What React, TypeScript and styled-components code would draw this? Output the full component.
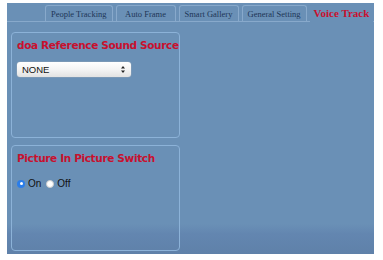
import React from "react";
import styled, { createGlobalStyle } from "styled-components";

const Global = createGlobalStyle`
  html, body { margin: 0; padding: 0; background: #ffffff; }
  body { width: 383px; height: 260px; overflow: hidden; }
`;

const Page = styled.div`
  padding: 3px 9px 0 7px;
`;

const Frame = styled.div`
  width: 367px;
  height: 251px;
  overflow: hidden;
  background: linear-gradient(to bottom, #6a90b6 0%, #6a90b6 88%, #6386b0 92%, #5f81a9 100%);
  display: flex;
  flex-direction: column;
`;

const TabBar = styled.div`
  display: flex;
  align-items: flex-end;
  height: 18px;
  padding-left: 38px;
  gap: 3px;
  border-bottom: 1px solid #88a9cb;
`;

const Tab = styled.div<{ $active?: boolean }>`
  flex-shrink: 0;
  white-space: nowrap;
  min-width: ${(p) => (p.$active ? "0" : "60px")};
  height: ${(p) => (p.$active ? "19px" : "16px")};
  box-sizing: border-box;
  padding: 0 ${(p) => (p.$active ? "4px" : "5px")};
  display: flex;
  align-items: center;
  justify-content: center;
  font-family: "Liberation Serif", "Times New Roman", serif;
  font-size: ${(p) => (p.$active ? "11px" : "8.5px")};
  font-weight: ${(p) => (p.$active ? 700 : 400)};
  color: ${(p) => (p.$active ? "#c8102e" : "#1e3656")};
  border: ${(p) => (p.$active ? "none" : "1px solid #88a9cb")};
  border-bottom: none;
  border-radius: 3px 3px 0 0;
  margin-bottom: ${(p) => (p.$active ? "-1px" : "0")};
  background: ${(p) => (p.$active ? "#6a90b6" : "transparent")};
`;

const Content = styled.div`
  padding: 10px 0 0 4px;
  display: flex;
  flex-direction: column;
  gap: 7px;
`;

const Panel = styled.div`
  width: 169px;
  height: 106px;
  box-sizing: border-box;
  border: 1px solid #8cb2d8;
  border-radius: 4px;
  padding: 6px 0 0 5px;
`;

const Title = styled.div`
  font-family: "DejaVu Sans", Verdana, sans-serif;
  font-weight: 700;
  font-size: 10.5px;
  line-height: 13px;
  color: #c8102e;
  white-space: nowrap;
  letter-spacing: -0.35px;
`;

const SelectBox = styled.div`
  margin-top: 10px;
  width: 114px;
  height: 15px;
  box-sizing: border-box;
  border-radius: 3px;
  background: linear-gradient(to bottom, #ffffff 0%, #f4f4f4 50%, #e2e2e2 100%);
  box-shadow: 0 0 0 0.5px #8a9fb5;
  display: flex;
  align-items: center;
  justify-content: space-between;
  padding: 0 6px 0 5px;
  font-family: "Liberation Sans", Arial, sans-serif;
  font-size: 9.5px;
  color: #111;
`;

const RadioRow = styled.div`
  margin-top: 13px;
  display: flex;
  align-items: center;
  gap: 3px;
  font-family: "Liberation Sans", Arial, sans-serif;
  font-size: 10px;
  color: #111;
`;

const Radio = styled.span<{ $on?: boolean }>`
  width: 8px;
  height: 8px;
  border-radius: 50%;
  box-sizing: border-box;
  background: ${(p) => (p.$on ? "#2b7de9" : "#ffffff")};
  border: ${(p) => (p.$on ? "none" : "0.5px solid #ccc")};
  display: inline-flex;
  align-items: center;
  justify-content: center;
  &::after {
    content: "";
    width: 3px;
    height: 3px;
    border-radius: 50%;
    background: ${(p) => (p.$on ? "#ffffff" : "transparent")};
  }
`;

const RadioLabel = styled.span`
  margin-right: 2px;
`;

const Arrows = () => (
  <svg width="4" height="7" viewBox="0 0 4 7">
    <path d="M2 0 L4 2.5 L0 2.5 Z M2 7 L4 4.5 L0 4.5 Z" fill="#222" />
  </svg>
);

export default function App() {
  return (
    <>
      <Global />
      <Page>
        <Frame>
          <TabBar>
            <Tab>People Tracking</Tab>
            <Tab>Auto Frame</Tab>
            <Tab>Smart Gallery</Tab>
            <Tab>General Setting</Tab>
            <Tab $active>Voice Track</Tab>
          </TabBar>
          <Content>
            <Panel>
              <Title>doa Reference Sound Source</Title>
              <SelectBox>
                <span>NONE</span>
                <Arrows />
              </SelectBox>
            </Panel>
            <Panel>
              <Title>Picture In Picture Switch</Title>
              <RadioRow>
                <Radio $on />
                <RadioLabel>On</RadioLabel>
                <Radio />
                <RadioLabel>Off</RadioLabel>
              </RadioRow>
            </Panel>
          </Content>
        </Frame>
      </Page>
    </>
  );
}
